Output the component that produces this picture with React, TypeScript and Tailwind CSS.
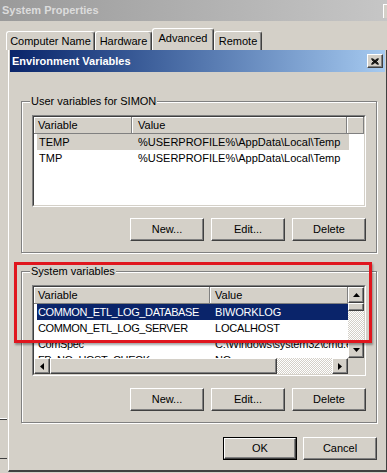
import React from "react";

const raised =
  "bg-[#d4d0c8] border border-t-white border-l-white border-r-[#404040] border-b-[#404040] shadow-[inset_-1px_-1px_0_#808080]";
const dotted =
  "bg-[image:repeating-conic-gradient(#ffffff_0%_25%,#d4d0c8_0%_50%)] bg-[length:2px_2px]";

function Arrow({ dir }: { dir: "up" | "down" | "left" | "right" }) {
  const pts = {
    up: "0,4 3.5,0 7,4",
    down: "0,0 3.5,4 7,0",
    left: "4,0 0,3.5 4,7",
    right: "0,0 4,3.5 0,7",
  }[dir];
  const vertical = dir === "up" || dir === "down";
  return (
    <div className={`w-[16px] h-[16px] flex items-center justify-center ${raised}`}>
      <svg width={vertical ? 7 : 4} height={vertical ? 4 : 7} viewBox={vertical ? "0 0 7 4" : "0 0 4 7"}>
        <polygon points={pts} fill="#000" />
      </svg>
    </div>
  );
}

function Btn({ label, def }: { label: string; def?: boolean }) {
  if (def) {
    return (
      <div className="w-[74px] h-[23px] border border-black flex">
        <div className={`flex-1 flex items-center justify-center ${raised}`}>{label}</div>
      </div>
    );
  }
  return <div className={`w-[74px] h-[23px] flex items-center justify-center ${raised}`}>{label}</div>;
}

function Tab({ label, w, active }: { label: string; w: string; active?: boolean }) {
  return (
    <div
      className={`${w} ${active ? "h-[22px] pb-[3px]" : "h-[19px]"} flex items-center justify-center border-t border-l border-r border-t-white border-l-white border-r-[#404040] shadow-[inset_-1px_0_0_#808080] rounded-t-[3px]`}
    >
      {label}
    </div>
  );
}

function Group({ title, children }: { title: string; children: React.ReactNode }) {
  return (
    <div className="relative w-[356px] h-[152px] border border-[#808080] shadow-[1px_1px_0_#fff,inset_1px_1px_0_#fff] pt-[13px] pl-[10px]">
      <span className="absolute left-[8px] -top-[8px] px-[1px] bg-[#d4d0c8] leading-[14px]">{title}</span>
      {children}
    </div>
  );
}

function Sunken({ h, children }: { h: string; children: React.ReactNode }) {
  return (
    <div className={`w-[334px] ${h} border border-t-[#808080] border-l-[#808080] border-r-white border-b-white`}>
      <div className="w-full h-full border border-t-[#404040] border-l-[#404040] border-r-[#d4d0c8] border-b-[#d4d0c8] bg-white overflow-hidden">
        {children}
      </div>
    </div>
  );
}

function Head({ w, label, pl }: { w: string; label?: string; pl: string }) {
  return (
    <div
      className={`${w} h-[17px] shrink-0 flex items-center ${pl} bg-[#d4d0c8] border-r border-b border-r-[#808080] border-b-[#808080] shadow-[inset_1px_1px_0_#fff]`}
    >
      {label}
    </div>
  );
}

const userVars = [
  { name: "TEMP", value: "%USERPROFILE%\\AppData\\Local\\Temp", sel: true },
  { name: "TMP", value: "%USERPROFILE%\\AppData\\Local\\Temp" },
];

const sysVars = [
  { name: "COMMON_ETL_LOG_DATABASE", value: "BIWORKLOG", sel: true },
  { name: "COMMON_ETL_LOG_SERVER", value: "LOCALHOST" },
  { name: "ComSpec", value: "C:\\Windows\\system32\\cmd.exe" },
  { name: "FP_NO_HOST_CHECK", value: "NO" },
];

function ButtonRow() {
  return (
    <div className="w-[334px] flex justify-end gap-[7px]">
      <Btn label="New..." />
      <Btn label="Edit..." />
      <Btn label="Delete" />
    </div>
  );
}

export default function App() {
  return (
    <div className="relative w-[387px] h-[473px] overflow-hidden bg-[#d4d0c8] text-black text-[11px] font-['Liberation_Sans',Arial,sans-serif]">
      {/* System Properties title (inactive) */}
      <div className="h-[21px] flex items-center justify-between pl-[2px] bg-linear-to-r from-[#9a9a9a] to-[#c6c6c6]">
        <span className="font-bold text-[#dcdcdc]">System Properties</span>
        <div className="w-[4px] h-[14px] border-l border-t border-white bg-[#d4d0c8]" />
      </div>

      {/* Tabs */}
      <div className="h-[29px] flex items-end pl-[6px]">
        <Tab label="Computer Name" w="w-[89px]" />
        <Tab label="Hardware" w="w-[57px]" />
        <Tab label="Advanced" w="w-[62px]" active />
        <Tab label="Remote" w="w-[48px]" />
      </div>

      <div className="flex">
        {/* what shows of the window behind */}
        <div className="w-[8px] flex flex-col">
          <div className="mt-[368px] w-[7px] h-px bg-white" />
          <div className="w-[7px] h-px bg-[#404040]" />
          <div className="mt-[38px] w-[7px] h-px bg-[#404040]" />
        </div>

        {/* Environment Variables dialog */}
        <div className="w-[379px] border-l border-l-white border-r border-r-[#404040] border-b-2 border-b-[#404040] px-[1px]">
          <div className="h-[22px] flex items-center justify-between pl-[2px] pr-[2px] bg-linear-to-r from-[#0a246a] to-[#a6caf0]">
            <span className="font-bold text-white">Environment Variables</span>
            <div className={`w-[16px] h-[14px] flex items-center justify-center ${raised}`}>
              <svg width="8" height="7" viewBox="0 0 8 7">
                <path d="M0.5 0.5 L7.5 6.5 M1.5 0.5 L7.5 5.5 M0.5 1.5 L6.5 6.5 M7.5 0.5 L0.5 6.5 M6.5 0.5 L0.5 5.5 M7.5 1.5 L1.5 6.5" stroke="#000" strokeWidth="1" />
              </svg>
            </div>
          </div>

          <div className="pt-[29px] pl-[11px] h-[398px]">
            <Group title="User variables for SIMON">
              <Sunken h="h-[92px]">
                <div className="flex">
                  <Head w="w-[98px]" label="Variable" pl="pl-[4px]" />
                  <Head w="w-[215px]" label="Value" pl="pl-[6px]" />
                  <Head w="w-[17px]" pl="" />
                </div>
                {userVars.map((v) => (
                  <div key={v.name} className={`ml-[3px] w-[312px] h-[16px] flex items-center ${v.sel ? "bg-[#d4d0c8]" : ""}`}>
                    <span className="w-[95px] pl-[2px]">{v.name}</span>
                    <span className="pl-[6px] whitespace-nowrap">{v.value}</span>
                  </div>
                ))}
              </Sunken>
              <div className="mt-[11px]">
                <ButtonRow />
              </div>
            </Group>

            <div className="mt-[18px]">
              <Group title="System variables">
                <Sunken h="h-[91px]">
                  <div className="flex flex-col h-full">
                    <div className="flex h-[71px]">
                      <div className="w-[314px] overflow-hidden">
                        <div className="flex">
                          <Head w="w-[176px]" label="Variable" pl="pl-[4px]" />
                          <Head w="w-[138px]" label="Value" pl="pl-[5px]" />
                        </div>
                        {sysVars.map((v) => (
                          <div
                            key={v.name}
                            className={`ml-[3px] w-[311px] h-[16px] shrink-0 flex items-center whitespace-nowrap overflow-hidden ${v.sel ? "bg-[#0a246a] text-white" : ""}`}
                          >
                            <span className="w-[173px] shrink-0 pl-[1px] tracking-[-0.4px]">{v.name}</span>
                            <span className="pl-[5px] tracking-[-0.2px]">{v.value}</span>
                          </div>
                        ))}
                      </div>
                      <div className="w-[16px] flex flex-col">
                        <Arrow dir="up" />
                        <div className={`h-[8px] ${raised}`} />
                        <div className={`flex-1 ${dotted}`} />
                        <Arrow dir="down" />
                      </div>
                    </div>
                    <div className="flex h-[16px]">
                      <div className="w-[314px] flex">
                        <Arrow dir="left" />
                        <div className={`w-[227px] ${raised}`} />
                        <div className={`flex-1 ${dotted}`} />
                        <Arrow dir="right" />
                      </div>
                      <div className="w-[16px] bg-[#d4d0c8]" />
                    </div>
                  </div>
                </Sunken>
                <div className="mt-[12px]">
                  <ButtonRow />
                </div>
              </Group>
            </div>

            <div className="mt-[14px] w-[356px] flex justify-end gap-[6px]">
              <Btn label="OK" def />
              <Btn label="Cancel" />
            </div>
          </div>
        </div>
      </div>

      {/* red highlight drawn over the screenshot */}
      <div className="absolute left-[14px] top-[262px] w-[358px] h-[81px] border-[3px] border-[#e0161e] shadow-[1px_2px_2px_rgba(0,0,0,0.35)]" />
    </div>
  );
}
